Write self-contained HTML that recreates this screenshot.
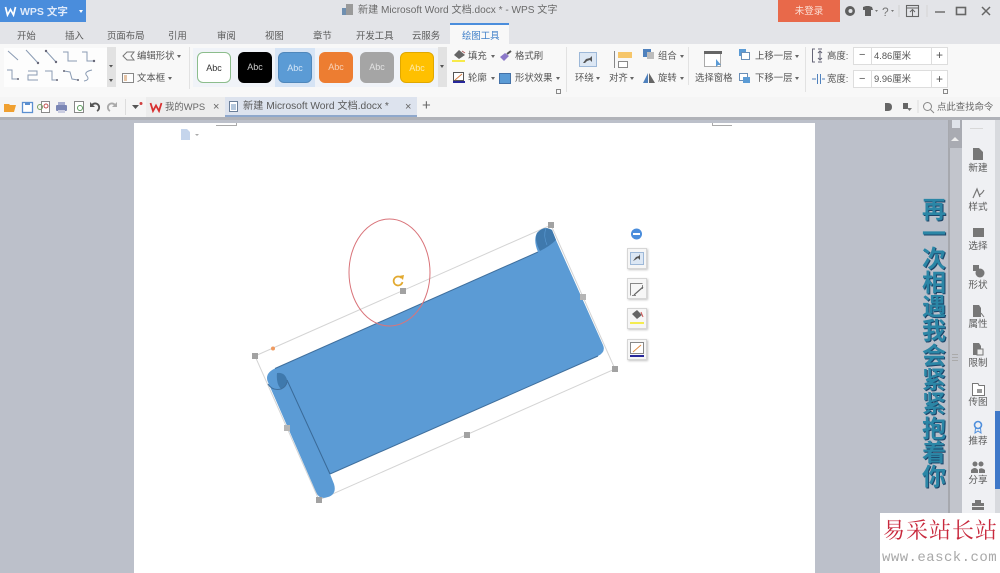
<!DOCTYPE html>
<html><head><meta charset="utf-8">
<style>
html,body{margin:0;padding:0;width:1000px;height:573px;overflow:hidden;background:#bcc0ca;}
body{position:relative;font-family:"Liberation Sans","Noto Sans CJK SC",sans-serif;color:#444;}
.a{position:absolute;white-space:nowrap;}
.t{position:absolute;white-space:nowrap;font-size:9.4px;line-height:14px;color:#555;}
.tab{position:absolute;top:29px;font-size:9.4px;line-height:14px;color:#5a5a5a;white-space:nowrap;}
.sw{position:absolute;top:52px;width:34px;height:31px;border-radius:6px;font-size:9px;line-height:31px;text-align:center;box-sizing:border-box;}
.sep{position:absolute;width:1px;background:#e2e2e2;}
.side{position:absolute;left:968px;width:20px;text-align:center;font-size:9.6px;line-height:12px;color:#5a5a5a;}
.qb{position:absolute;left:627px;width:20px;height:21px;background:#f6f6f6;border:1px solid #d6d6d6;box-shadow:1px 1px 2px #c4c4c4;box-sizing:border-box;}
.ar{position:absolute;border:2px solid transparent;border-top:3px solid #666;}
</style></head><body>
<!-- title bar -->
<div class="a" style="left:0;top:0;width:1000px;height:44px;background:#e3e4e8;"></div>
<div class="a" style="left:0;top:0;width:86px;height:22px;background:#4a8ddc;"></div>
<svg class="a" style="left:4px;top:5px" width="13" height="12"><path d="M1.500 2 L3.500 10 L6.500 4.500 L9.500 10 L11.500 2" fill="none" stroke="#fff" stroke-width="1.700"/></svg>
<div class="a" style="left:20px;top:5px;font-size:10.5px;line-height:14px;color:#dfeafa;font-weight:bold;">WPS 文字</div>
<div class="a" style="left:79px;top:10px;border:2.500px solid transparent;border-top:3px solid #fff;"></div>
<svg class="a" style="left:341px;top:3px" width="13" height="13"><rect x="1" y="5" width="6" height="7" fill="#6f8fb0"/><rect x="5" y="1" width="7" height="11" fill="#9a9a9a"/></svg>
<div class="a" style="left:358px;top:4px;font-size:10.1px;line-height:14px;color:#6a6a6a;">新建 Microsoft Word 文档.docx * - WPS 文字</div>
<div class="a" style="left:778px;top:0;width:62px;height:22px;background:#e8694a;color:#fbe0d6;font-size:9.5px;line-height:24px;text-align:center;">未登录</div>
<svg class="a" style="left:844px;top:3px" width="156" height="18">
<circle cx="6" cy="8" r="5" fill="#5f5f5f"/><circle cx="6.500" cy="8" r="2" fill="#e3e4e8"/>
<path d="M19 4 L22 3 L25 3 L28 4 L29 7 L27 7 L27 13 L21 13 L21 7 L19 7Z" fill="#5f5f5f"/>
<path d="M31 7 l3 0 l-1.500 2z" fill="#777"/>
<text x="38" y="13" font-size="12" fill="#777" font-family="Liberation Sans">?</text>
<path d="M47 7 l3 0 l-1.500 2z" fill="#777"/>
<line x1="55" y1="2" x2="55" y2="14" stroke="#cfcfcf"/>
<rect x="62.500" y="2.500" width="12" height="11" fill="none" stroke="#666" stroke-width="1.100"/>
<path d="M63 5 H74 M68.500 13 V7 M66 9 l2.500 -2.500 l2.500 2.500" fill="none" stroke="#666"/>
<line x1="83" y1="2" x2="83" y2="14" stroke="#d4d4d4"/>
<line x1="91" y1="9" x2="101" y2="9" stroke="#666" stroke-width="1.400"/>
<rect x="112.500" y="4.500" width="9" height="7" fill="none" stroke="#666" stroke-width="1.600"/>
<path d="M138 4 L146 12 M146 4 L138 12" stroke="#666" stroke-width="1.500"/>
</svg>
<!-- tabs -->
<div class="tab" style="left:17px">开始</div>
<div class="tab" style="left:65px">插入</div>
<div class="tab" style="left:107px">页面布局</div>
<div class="tab" style="left:168px">引用</div>
<div class="tab" style="left:217px">审阅</div>
<div class="tab" style="left:265px">视图</div>
<div class="tab" style="left:313px">章节</div>
<div class="tab" style="left:356px">开发工具</div>
<div class="tab" style="left:412px">云服务</div>
<div class="a" style="left:450px;top:23px;width:59px;height:21px;background:#f8f8f8;border-top:2px solid #4a8ddc;box-sizing:border-box;"></div>
<div class="tab" style="left:462px;color:#3f7fc9">绘图工具</div>
<!-- ribbon -->
<div class="a" style="left:0;top:44px;width:1000px;height:53px;background:#f8f8f8;"></div>
<div class="a" style="left:4px;top:48px;width:103px;height:39px;background:#fdfdfd;"></div>
<div class="a" style="left:107px;top:47px;width:9px;height:40px;background:#e2e2e2;"></div>
<svg class="a" style="left:0;top:40px" width="118" height="50" fill="none" stroke="#8a9bb3" stroke-width="1">
<path d="M8 11 L18 20 M26 10 L38 23 M46 11 L56 22 M63 12 H68 V21 H77 M82 12 H87 V21 H94"/>
<path d="M7 30 H12 V39 H18 M28 31 H37 V35 H28 V40 H38 M45 31 H52 V40 H57 M64 31 L70 32 L72 39 L78 40 M92 30 Q83 32 87 36 Q90 40 84 41"/>
<g fill="#667" stroke="none"><circle cx="38" cy="23" r="1.200"/><circle cx="46" cy="11" r="1.200"/><circle cx="56" cy="22" r="1.200"/><circle cx="94" cy="21" r="1.200"/><circle cx="18" cy="39" r="1"/><circle cx="57" cy="40" r="1"/><circle cx="64" cy="31" r="1"/><circle cx="78" cy="40" r="1"/></g>
<path d="M109 25 l4 0 l-2 2.500z M109 39 l4 0 l-2 3z" fill="#555" stroke="none"/>
</svg>
<svg class="a" style="left:121px;top:49px" width="16" height="36"><path d="M2 7 L6 3 H13 L10 7 L13 11 H6Z" fill="none" stroke="#777"/><rect x="1.500" y="24.500" width="11" height="9" fill="#fdfdfd" stroke="#888"/><path d="M3 27 H6 M3 29 H6 M3 31 H6" stroke="#d08a50"/></svg>
<div class="t" style="left:137px;top:49px">编辑形状</div><div class="ar" style="left:177px;top:55px"></div>
<div class="t" style="left:137px;top:71px">文本框</div><div class="ar" style="left:168px;top:77px"></div>
<div class="sep" style="left:189px;top:47px;height:42px"></div>
<!-- style gallery -->
<div class="a" style="left:193px;top:48px;width:245px;height:39px;background:#f0f3f8;"></div>
<div class="a" style="left:275px;top:48px;width:40px;height:39px;background:#d6e4f5;"></div>
<div class="a" style="left:438px;top:47px;width:9px;height:40px;background:#e2e2e2;"></div>
<div class="a" style="left:440px;top:65px;border:2px solid transparent;border-top:3px solid #555"></div>
<div class="sw" style="left:197px;background:#fff;border:1px solid #8cbd8c;color:#333">Abc</div>
<div class="sw" style="left:238px;background:#000;color:#ccc">Abc</div>
<div class="sw" style="left:278px;background:#5b9bd5;border:1px solid #4f87bb;color:#d5e6f7">Abc</div>
<div class="sw" style="left:319px;background:#ed7d31;color:#f8d2b8">Abc</div>
<div class="sw" style="left:360px;background:#a5a5a5;color:#e2e2e2">Abc</div>
<div class="sw" style="left:400px;background:#ffc000;border:1px solid #e0a800;color:#fde9a9">Abc</div>
<!-- fill/outline -->
<svg class="a" style="left:450px;top:48px" width="64" height="38">
<path d="M4 7 L9 2 L15 7 L9 11Z" fill="#666"/><path d="M12 3 L15 5" stroke="#b06060"/><rect x="2" y="12" width="13" height="2" fill="#f7ea4a"/>
<rect x="3.500" y="24.500" width="10" height="8" fill="#fff" stroke="#555"/><path d="M5 32 L12 26" stroke="#d07a40"/><rect x="3" y="33" width="12" height="2" fill="#27279a"/>
<path d="M50 9 L55 5 L59 8 L54 13Z" fill="#8c79c9"/><path d="M57 6 L61 3" stroke="#555" stroke-width="2"/><rect x="49.500" y="25.500" width="11" height="10" fill="#5b9bd5" stroke="#4472a8"/>
</svg>
<div class="t" style="left:468px;top:49px">填充</div><div class="ar" style="left:491px;top:55px"></div>
<div class="t" style="left:468px;top:71px">轮廓</div><div class="ar" style="left:491px;top:77px"></div>
<div class="t" style="left:515px;top:49px">格式刷</div>
<div class="t" style="left:515px;top:71px">形状效果</div><div class="ar" style="left:556px;top:77px"></div>
<div class="a" style="left:556px;top:89px;width:3px;height:3px;border:1px solid #888"></div>
<div class="sep" style="left:566px;top:47px;height:45px"></div>
<!-- arrange -->
<svg class="a" style="left:578px;top:50px" width="60" height="20">
<rect x="1.500" y="2.500" width="17" height="14" fill="#dce7f4" stroke="#9db8d8"/><path d="M5 13 L8 9 L12 8 L14 6 L14 12 L12 10 L9 11 L7 13Z" fill="#555"/>
<line x1="36.500" y1="1" x2="36.500" y2="18" stroke="#888"/><rect x="40" y="2" width="14" height="6" fill="#f6c66a"/><rect x="40.500" y="11.500" width="9" height="6" fill="#fff" stroke="#888"/>
</svg>
<div class="t" style="left:575px;top:71px">环绕</div><div class="ar" style="left:596px;top:77px"></div>
<div class="t" style="left:609px;top:71px">对齐</div><div class="ar" style="left:630px;top:77px"></div>
<svg class="a" style="left:642px;top:48px" width="14" height="38"><rect x="1" y="1" width="8" height="8" fill="#4f81bd"/><rect x="5" y="4" width="7" height="7" fill="#bcbcbc"/><path d="M1 35 L6 25 V35Z" fill="#4f81bd"/><path d="M7 25 L13 35 H7Z" fill="#666"/></svg>
<div class="t" style="left:658px;top:49px">组合</div><div class="ar" style="left:680px;top:55px"></div>
<div class="t" style="left:658px;top:71px">旋转</div><div class="ar" style="left:680px;top:77px"></div>
<div class="sep" style="left:688px;top:47px;height:38px"></div>
<svg class="a" style="left:703px;top:50px" width="20" height="18"><rect x="1.500" y="1.500" width="16" height="15" fill="#fff" stroke="#aaa"/><rect x="1" y="1" width="18" height="3" fill="#666"/><path d="M13 9 L13 17 L15 15 L18 15Z" fill="#5b9bd5"/></svg>
<div class="t" style="left:695px;top:71px">选择窗格</div>
<svg class="a" style="left:738px;top:48px" width="14" height="38"><rect x="1" y="1" width="7" height="7" fill="#5b9bd5"/><rect x="3.500" y="4.500" width="8" height="7" fill="#fff" stroke="#6a8fb8"/><rect x="1.500" y="25.500" width="8" height="7" fill="#fff" stroke="#6a8fb8"/><rect x="5" y="29" width="7" height="6" fill="#5b9bd5"/></svg>
<div class="t" style="left:755px;top:49px">上移一层</div><div class="ar" style="left:795px;top:55px"></div>
<div class="t" style="left:755px;top:71px">下移一层</div><div class="ar" style="left:795px;top:77px"></div>
<div class="sep" style="left:805px;top:47px;height:45px"></div>
<svg class="a" style="left:811px;top:48px" width="14" height="38" fill="none" stroke="#667"><path d="M1.500 1 V14 M1 1 H4 M1 14 H4 M9 3 V12 M7 5 L9 3 L11 5 M7 10 L9 12 L11 10 M7 1 H11 M7 14 H11"/><path d="M6.500 26 V36 M9.500 26 V36 M1 31 H5 M11 31 H14" stroke="#4f81bd"/></svg>
<div class="t" style="left:827px;top:49px">高度:</div>
<div class="t" style="left:827px;top:72px">宽度:</div>
<div class="a" style="left:853px;top:47px;width:95px;height:18px;background:#fff;border:1px solid #ddd;box-sizing:border-box;"></div>
<div class="a" style="left:853px;top:70px;width:95px;height:18px;background:#fff;border:1px solid #ddd;box-sizing:border-box;"></div>
<div class="a" style="left:871px;top:47px;width:1px;height:18px;background:#ddd;"></div>
<div class="a" style="left:931px;top:47px;width:1px;height:18px;background:#ddd;"></div>
<div class="a" style="left:871px;top:70px;width:1px;height:18px;background:#ddd;"></div>
<div class="a" style="left:931px;top:70px;width:1px;height:18px;background:#ddd;"></div>
<div class="t" style="left:859px;top:48px;font-size:11px">−</div><div class="t" style="left:859px;top:72px;font-size:11px">−</div>
<div class="t" style="left:874px;top:49px">4.86厘米</div><div class="t" style="left:874px;top:72px">9.96厘米</div>
<div class="t" style="left:936px;top:48px;font-size:12px">+</div><div class="t" style="left:936px;top:72px;font-size:12px">+</div>
<div class="a" style="left:943px;top:89px;width:3px;height:3px;border:1px solid #888"></div>
<!-- quick access row -->
<div class="a" style="left:0;top:97px;width:1000px;height:20px;background:#f5f5f5;"></div>
<div class="a" style="left:0;top:117px;width:1000px;height:3px;background:#b0b2b8;"></div>
<svg class="a" style="left:3px;top:99px" width="120" height="16">
<path d="M1 5 H6 L7 6 H13 L11 13 H1Z" fill="#f0a030"/>
<rect x="19.500" y="3.500" width="10" height="10" fill="#fff" stroke="#5b8fd0" stroke-width="1.300"/><rect x="22" y="3" width="5" height="3" fill="#5b8fd0"/>
<rect x="38.500" y="2.500" width="8" height="11" fill="#fff" stroke="#8a8a8a"/><circle cx="37" cy="8" r="2.500" fill="none" stroke="#7aa060"/><circle cx="43" cy="7" r="2" fill="none" stroke="#c0504d"/>
<rect x="53" y="6" width="11" height="6" rx="1" fill="#7b86b5"/><rect x="55" y="3" width="7" height="3" fill="#a8aed0"/><rect x="55" y="11" width="7" height="3" fill="#c9cce0"/>
<rect x="71.500" y="2.500" width="9" height="11" fill="#fff" stroke="#888"/><circle cx="77" cy="9" r="2.500" fill="none" stroke="#5a9a5a"/>
<path d="M89 6 A4 4 0 1 1 94 12" fill="none" stroke="#555" stroke-width="1.800"/><path d="M87 3 V8 H92Z" fill="#555"/>
<path d="M112 6 A4 4 0 1 0 107 12" fill="none" stroke="#aaa" stroke-width="1.800"/><path d="M114 3 V8 H109Z" fill="#aaa"/>
</svg>
<div class="a" style="left:125px;top:99px;width:1px;height:16px;background:#ddd;"></div>
<svg class="a" style="left:131px;top:101px" width="14" height="12"><path d="M1 4 H8 L4.500 8Z" fill="#555"/><circle cx="10" cy="2.500" r="1.500" fill="#d04040"/></svg>
<div class="a" style="left:146px;top:97px;width:79px;height:20px;background:#ededed;"></div>
<svg class="a" style="left:149px;top:101px" width="14" height="12"><path d="M1.500 2 L4 10 L7 4.500 L10 10 L12.500 2" fill="none" stroke="#d83030" stroke-width="1.800"/></svg>
<div class="t" style="left:165px;top:100px;color:#666">我的WPS</div>
<div class="t" style="left:213px;top:100px;font-size:11px;color:#666">×</div>
<div class="a" style="left:225px;top:97px;width:192px;height:20px;background:#dde3ee;border-bottom:2px solid #8fa8cc;box-sizing:border-box;"></div>
<svg class="a" style="left:228px;top:100px" width="12" height="13"><rect x="1.500" y="1.500" width="8" height="10" fill="#fff" stroke="#6a7e98"/><path d="M3 5 H8 M3 7 H8 M3 9 H8" stroke="#6a8fb8"/></svg>
<div class="t" style="left:243px;top:100px;color:#5a5a5a;font-size:10.2px">新建 Microsoft Word 文档.docx *</div>
<div class="t" style="left:405px;top:100px;font-size:11px;color:#666">×</div>
<div class="t" style="left:422px;top:99px;font-size:15px;color:#666">+</div>
<svg class="a" style="left:882px;top:100px" width="40" height="14"><path d="M3 3 H6 Q10 3 10 7 Q10 11 6 11 H3Z" fill="#666"/><rect x="21" y="3" width="5" height="6" fill="#666"/><path d="M25 8 L30 8 L27.500 11Z" fill="#777"/><line x1="36" y1="0" x2="36" y2="13" stroke="#ddd"/></svg>
<svg class="a" style="left:922px;top:101px" width="13" height="13"><circle cx="5.500" cy="5.500" r="4" fill="none" stroke="#888"/><path d="M8.500 8.500 L12 12" stroke="#888"/></svg>
<div class="t" style="left:937px;top:100px;color:#666">点此查找命令</div>
<!-- doc -->
<div class="a" style="left:0;top:120px;width:948px;height:453px;background:#bcc0ca;"></div>
<div class="a" style="left:134px;top:123px;width:681px;height:450px;background:#fff;"></div>
<div class="a" style="left:216px;top:125px;width:20px;height:1px;background:#aaa;"></div>
<div class="a" style="left:236px;top:123px;width:1px;height:3px;background:#aaa;"></div>
<div class="a" style="left:712px;top:125px;width:20px;height:1px;background:#aaa;"></div>
<div class="a" style="left:712px;top:123px;width:1px;height:3px;background:#aaa;"></div>
<svg class="a" style="left:180px;top:128px" width="22" height="13"><path d="M1 1 H7 L10 4 V12 H1Z" fill="#c5d5ec"/><path d="M15 6 h4 l-2 2z" fill="#aaa"/></svg>
<!-- shape -->
<svg class="a" style="left:0;top:0" width="1000" height="573">
<path d="M255 356 L551 225 L615 369 L319 500Z" fill="none" stroke="#d4d4d4" stroke-width="1"/>
<path d="M267.500 381 Q265 373 275 368.500 L538 252 Q533 240 537 233 Q544 225 552 230 L556 240 L603 345 Q606 352 598 356 L330 474 L334 484 Q337 494 328 497 Q319 500 316 492Z" fill="#5b9bd5"/>
<path d="M540 251 Q534 240 537 233 Q544 225 552 230 L556 240 Q550 246 540 251Z" fill="#3f79ad"/>
<path d="M546 228 Q543 236 547 245" stroke="#5b9bd5" fill="none" stroke-width=".6"/>
<path d="M277 373 Q285 372 287 380 Q288 386 281 389 Q276 384 277 373Z" fill="#3f79ad"/>
<path d="M275 368.500 L538 252" stroke="#3f6f9d" stroke-width="1" fill="none"/>
<path d="M330 474 L598 356" stroke="#3f6f9d" stroke-width="1" fill="none"/>
<path d="M287 380 L330 474" stroke="#3a6a98" stroke-width="1" fill="none"/>
<path d="M268 384 Q272 391 281 389 Q286 387 287 382" stroke="#3f6f9d" stroke-width="1" fill="none"/>
<ellipse cx="389.500" cy="272.500" rx="40.500" ry="53.500" fill="none" stroke="#d9747a" stroke-width="1"/>
<path d="M401.500 278 A4.500 4.500 0 1 0 402.500 282" fill="none" stroke="#e2a92f" stroke-width="1.700"/>
<path d="M399 276 L404 275 L403 280Z" fill="#e2a92f"/>
<g fill="#a2a2a2"><rect x="252" y="353" width="6" height="6"/><rect x="548" y="222" width="6" height="6"/><rect x="612" y="366" width="6" height="6"/><rect x="316" y="497" width="6" height="6"/><rect x="400" y="288" width="6" height="6"/><rect x="464" y="432" width="6" height="6"/></g>
<g fill="#b5b5b5"><rect x="580" y="294" width="6" height="6"/><rect x="284" y="425" width="6" height="6"/></g>
<circle cx="273" cy="348.500" r="2" fill="#ef9a60"/>
<circle cx="636.500" cy="234" r="5.500" fill="#4a8ddc"/><rect x="633" y="233" width="7" height="2" fill="#fff"/>
</svg>
<div class="qb" style="top:248px"></div><div class="qb" style="top:278px"></div><div class="qb" style="top:308px"></div><div class="qb" style="top:339px"></div>
<svg class="a" style="left:626px;top:248px" width="22" height="115">
<rect x="4.500" y="4.500" width="13" height="12" fill="#dce7f4" stroke="#9db8d8"/><path d="M7 13 L10 9 L13 8 L14 6 L14 12 L12 10 L9 12Z" fill="#555"/>
<path d="M4.500 47.500 V35.500 H16.500" fill="none" stroke="#888"/><path d="M16.500 37 V41 M6 47.500 H10" stroke="#888"/><path d="M8 47 L17 39" stroke="#666" stroke-width="1.200"/>
<path d="M6 66 L11 62 L16 67 L11 71Z" fill="#666"/><path d="M15 64 L17 69" stroke="#d05050"/><rect x="4" y="74" width="14" height="2" fill="#f4ec50"/>
<rect x="4.500" y="94.500" width="13" height="11" fill="#fff" stroke="#888"/><path d="M7 104 L15 97" stroke="#e08a40"/><rect x="4" y="107" width="14" height="2" fill="#27279a"/>
</svg>
<!-- vertical text -->
<div class="a" style="left:921px;top:199px;width:26px;font-size:24px;line-height:24.300px;font-weight:bold;white-space:normal;text-align:center;color:#2b86a6;text-shadow:1px 1px 0 #1d4468;">再<br>一<br>次<br>相<br>遇<br>我<br>会<br>紧<br>紧<br>抱<br>着<br>你</div>
<!-- scrollbar -->
<div class="a" style="left:948px;top:120px;width:14px;height:453px;background:#c2c5cc;"></div>
<div class="a" style="left:948px;top:120px;width:2px;height:453px;background:#a6a8ae;"></div>
<div class="a" style="left:949px;top:120px;width:13px;height:28px;background:#a9abb2;"></div>
<div class="a" style="left:952px;top:120px;width:8px;height:8px;background:#dfe3ea;"></div>
<div class="a" style="left:951px;top:137px;border:4px solid transparent;border-bottom:4px solid #eee;border-top:0"></div>
<div class="a" style="left:952px;top:354px;width:6px;height:7px;border-top:1px solid #aaa;border-bottom:1px solid #aaa;box-sizing:border-box;"></div>
<div class="a" style="left:952px;top:357px;width:6px;height:1px;background:#aaa;"></div>
<!-- sidebar -->
<div class="a" style="left:962px;top:120px;width:33px;height:453px;background:#eff0f3;"></div>
<div class="a" style="left:995px;top:120px;width:5px;height:453px;background:#d8dade;"></div>
<div class="a" style="left:995px;top:411px;width:5px;height:78px;background:#3f78c8;"></div>
<div class="a" style="left:970px;top:128px;width:13px;height:1px;background:#d8d8d8;"></div>
<svg class="a" style="left:968px;top:145px" width="20" height="365">
<path d="M5 3 H11 L15 7 V15 H5Z" fill="#777"/>
<path d="M5 53 L9 44 L12 52 M11 50 Q14 49 16 45" fill="none" stroke="#777" stroke-width="1.200"/>
<rect x="5" y="83" width="11" height="9" fill="#777"/>
<rect x="5" y="120" width="6" height="6" fill="#777"/><circle cx="12" cy="128" r="4.500" fill="#777"/>
<path d="M5 160 H11 L13 163 V172 H5Z" fill="#777"/><path d="M13 168 L16 172" stroke="#777"/>
<path d="M5 198 H11 L13 201 V210 H5Z" fill="#777"/><rect x="9" y="204" width="6" height="6" fill="#eee" stroke="#777"/>
<path d="M4.500 238.500 H10 L11 240.500 H16.500 V250.500 H4.500Z" fill="#fff" stroke="#777"/><rect x="9" y="244" width="5" height="4" fill="#999"/>
<circle cx="10" cy="280" r="3.500" fill="none" stroke="#4f8fdc" stroke-width="1.600"/><path d="M7.500 283 L7 288 L10 286 L13 288 L12.500 283" fill="none" stroke="#4f8fdc"/>
<circle cx="7" cy="319" r="2.500" fill="#777"/><circle cx="13" cy="319" r="2.500" fill="#777"/><path d="M3 328 V325 Q7 321 10 325 V328Z M11 328 V324 Q14 322 17 325 V328Z" fill="#777"/>
<path d="M4 358 H16 V366 H4Z M7 358 V355 H13 V358" fill="#777"/><rect x="4" y="361" width="12" height="1" fill="#eee"/>
</svg>
<div class="side" style="top:163px">新建</div>
<div class="side" style="top:202px">样式</div>
<div class="side" style="top:241px">选择</div>
<div class="side" style="top:280px">形状</div>
<div class="side" style="top:319px">属性</div>
<div class="side" style="top:358px">限制</div>
<div class="side" style="top:397px">传图</div>
<div class="side" style="top:436px">推荐</div>
<div class="side" style="top:475px">分享</div>
<!-- watermark -->
<div class="a" style="left:880px;top:513px;width:120px;height:60px;background:#fff;"></div>
<div class="a" style="left:883px;top:515px;font-family:'Noto Serif CJK SC','Liberation Serif',serif;font-size:22px;line-height:30px;color:#c8283c;letter-spacing:1px;">易采站长站</div>
<div class="a" style="left:882px;top:549px;font-family:'Liberation Mono',monospace;font-size:14px;line-height:18px;color:#a8a8a8;letter-spacing:.45px;">www.easck.com</div>
</body></html>
